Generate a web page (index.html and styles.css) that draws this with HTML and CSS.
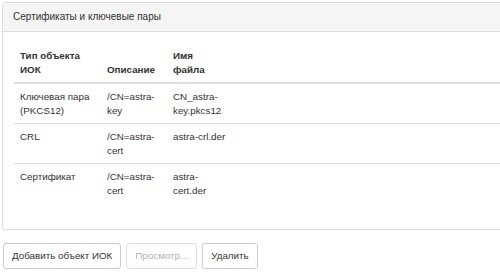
FILE: index.html
```html
<!DOCTYPE html>
<html lang="ru">
<head>
    <meta charset="UTF-8">
    <meta name="viewport" content="width=device-width, initial-scale=1.0">
    <title>Сертификаты и ключевые пары</title>
    <link rel="stylesheet" href="styles.css">
</head>
<body>
    <div class="panel">
        <div class="panel-heading">Сертификаты и ключевые пары</div>
        <div class="panel-body">
            <table class="table">
                <colgroup>
                    <col class="col-type">
                    <col class="col-desc">
                    <col class="col-file">
                    <col>
                </colgroup>
                <thead>
                    <tr>
                        <th>Тип объекта ИОК</th>
                        <th>Описание</th>
                        <th>Имя файла</th>
                        <th></th>
                    </tr>
                </thead>
                <tbody>
                    <tr>
                        <td>Ключевая пара (PKCS12)</td>
                        <td>/CN=astra-key</td>
                        <td>CN_astra-key.pkcs12</td>
                        <td></td>
                    </tr>
                    <tr>
                        <td>CRL</td>
                        <td>/CN=astra-cert</td>
                        <td>astra-crl.der</td>
                        <td></td>
                    </tr>
                    <tr>
                        <td>Сертификат</td>
                        <td>/CN=astra-cert</td>
                        <td>astra-cert.der</td>
                        <td></td>
                    </tr>
                </tbody>
            </table>
        </div>
    </div>
    <div class="actions">
        <button class="btn">Добавить объект ИОК</button>
        <button class="btn" disabled>Просмотр...</button>
        <button class="btn">Удалить</button>
    </div>
</body>
</html>
```

FILE: styles.css
```css
body {
    margin: 2px 0 2px 2px;
    font-family: "Liberation Sans", Arial, sans-serif;
    font-size: 9.8px;
    line-height: 14px;
    color: #333;
    background: #fff;
    overflow: hidden;
}
.panel {
    border: 1px solid #ddd;
    border-right: none;
    border-radius: 3px 0 0 3px;
    background: #fff;
}
.panel-heading {
    background-color: #f5f5f5;
    border-bottom: 1px solid #ddd;
    padding: 7px 10px;
    font-size: 10px;
    line-height: 14px;
}
.panel-body {
    padding: 11px 0 11px 11px;
}
.table {
    width: 100%;
    border-collapse: collapse;
    table-layout: fixed;
    margin-bottom: 15px;
}
.col-type {
    width: 87px;
}
.col-desc {
    width: 66px;
}
.col-file {
    width: 66.5px;
}
.table th,
.table td {
    text-align: left;
    vertical-align: bottom;
    padding: 6px 6px 5px;
    word-wrap: break-word;
}
.table th {
    font-weight: bold;
    padding-right: 10px;
    border-bottom: 2px solid #ddd;
}
.table td {
    vertical-align: top;
    border-top: 1px solid #ddd;
}
.table tbody tr:first-child td {
    border-top: none;
}
.actions {
    display: flex;
    gap: 5px;
    margin-top: 13px;
    margin-left: 1px;
}
.btn {
    font-family: "Liberation Sans", Arial, sans-serif;
    font-size: 9.8px;
    line-height: 14px;
    color: #333;
    background: #fff;
    border: 1px solid #ccc;
    border-radius: 3px;
    padding: 5px 8px;
}
.btn:disabled {
    opacity: 0.65;
    color: #888;
}
```
